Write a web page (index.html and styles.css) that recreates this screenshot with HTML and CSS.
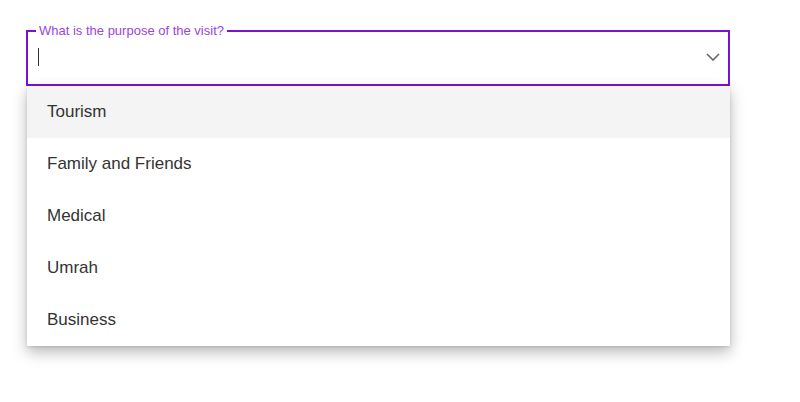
FILE: index.html
```html
<!DOCTYPE html>
<html>
    <head>
        <link rel="stylesheet" href="styles.css">
    </head>
    <body>
        <div class="selectWrap">
            <fieldset class="selectField">
                <legend class="selectLabel">What is the purpose of the visit?</legend>
                <div class="selectInner">
                    <span class="caret"></span>
                    <svg class="chevron" width="14" height="8" viewBox="0 0 14 8">
                        <path d="M1 1 L7 7 L13 1" fill="none" stroke="#666" stroke-width="1.6"/>
                    </svg>
                </div>
            </fieldset>

            <ul class="menu">
                <li class="menuItem active">Tourism</li>
                <li class="menuItem">Family and Friends</li>
                <li class="menuItem">Medical</li>
                <li class="menuItem">Umrah</li>
                <li class="menuItem">Business</li>
            </ul>
        </div>
    </body>
</html>
```

FILE: styles.css
```css
html, body {
    height: 100%;
}

body {
    margin: 0;
    background: #fff;
    font-family: "Liberation Sans", Arial, sans-serif;
}

.selectWrap {
    width: 704px;
    padding: 24px 0 0 26px;
}

.selectField {
    margin: 0;
    padding: 0;
    border: 2px solid #7a12d4;
    height: 62px;
    box-sizing: border-box;
}

.selectLabel {
    margin-left: 8px;
    padding: 0 3px;
    font-size: 13px;
    line-height: 14px;
    color: #9a45e0;
}

.selectInner {
    display: flex;
    align-items: center;
    justify-content: space-between;
    height: 50px;
    padding: 0 8px 0 10px;
    margin-top: -6px;
}

.caret {
    width: 1px;
    height: 18px;
    background: #333;
}

.chevron {
    display: block;
}

.menu {
    list-style: none;
    margin: 0 0 0 1px;
    padding: 0;
    width: 703px;
    background: #fff;
    box-shadow: 0 6px 14px rgba(0, 0, 0, 0.28), 0 1px 3px rgba(0, 0, 0, 0.12);
}

.menuItem {
    height: 52px;
    line-height: 52px;
    padding-left: 20px;
    font-size: 17px;
    color: #333;
}

.active {
    background: #f4f4f4;
}
```
